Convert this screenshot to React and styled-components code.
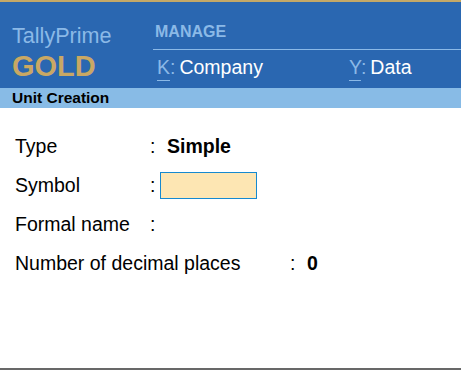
import React from "react";
import styled, { createGlobalStyle } from "styled-components";

const GlobalStyle = createGlobalStyle`
  html, body { margin: 0; padding: 0; background: #ffffff; }
  body { font-family: "Liberation Sans", Arial, sans-serif; }
  * { box-sizing: border-box; }
`;

const Frame = styled.div`
  width: 461px;
  height: 370px;
  display: flex;
  flex-direction: column;
  border-top: 2px solid #c4a867;
  border-bottom: 2px solid #686868;
  background: #ffffff;
  overflow: hidden;
`;

const Header = styled.header`
  height: 86px;
  background: #2a67b1;
  display: flex;
`;

const Brand = styled.div`
  width: 153px;
  padding: 23px 0 0 12px;
  display: flex;
  flex-direction: column;
`;

const BrandName = styled.div`
  font-size: 21.6px;
  line-height: 21px;
  color: #8bb9e7;
`;

const BrandEdition = styled.div`
  margin-top: 6px;
  font-size: 29px;
  line-height: 28px;
  font-weight: bold;
  color: #c9a864;
`;

const MenuArea = styled.nav`
  flex: 1;
  display: flex;
  flex-direction: column;
  padding-top: 22px;
`;

const SectionTitle = styled.div`
  padding-left: 2px;
  font-size: 16px;
  line-height: 16px;
  font-weight: bold;
  color: #8bb9e7;
`;

const Divider = styled.div`
  margin-top: 9px;
  height: 1px;
  background: #8bb9e7;
`;

const MenuRow = styled.div`
  margin-top: 8px;
  padding-left: 4px;
  display: grid;
  grid-template-columns: 192px 1fr;
`;

const MenuItem = styled.div`
  font-size: 19.5px;
  line-height: 19px;
  color: #ffffff;
  white-space: nowrap;
`;

const Key = styled.span`
  color: #8bb9e7;
  text-decoration: underline;
  text-decoration-thickness: 1px;
  text-underline-offset: 6px;
`;

const KeySep = styled.span`
  color: #8bb9e7;
  margin-right: 4px;
`;

const TitleBar = styled.div`
  height: 20px;
  background: #88bbe6;
  padding-left: 12px;
  font-size: 15.5px;
  line-height: 20px;
  font-weight: bold;
  color: #000000;
`;

const Body = styled.main`
  flex: 1;
  padding: 19px 0 0 15px;
  display: flex;
  flex-direction: column;
`;

const Row = styled.div`
  height: 39px;
  display: flex;
  align-items: center;
  font-size: 19.5px;
  line-height: 39px;
  color: #000000;
`;

const Label = styled.div`
  width: ${(p) => p.$width}px;
  white-space: nowrap;
`;

const Colon = styled.span`
  width: 10px;
`;

const Value = styled.div`
  padding-left: 7px;
  font-weight: bold;
`;

const Field = styled.div`
  width: 97px;
  height: 27px;
  background: #fde6b3;
  border: 1px solid #1689cf;
`;

const fields = [
  { label: "Type", width: 135, value: "Simple" },
  { label: "Symbol", width: 135, input: true },
  { label: "Formal name", width: 135, value: "" },
  { label: "Number of decimal places", width: 275, value: "0" },
];

export default function App() {
  return (
    <>
      <GlobalStyle />
      <Frame>
        <Header>
          <Brand>
            <BrandName>TallyPrime</BrandName>
            <BrandEdition>GOLD</BrandEdition>
          </Brand>
          <MenuArea>
            <SectionTitle>MANAGE</SectionTitle>
            <Divider />
            <MenuRow>
              <MenuItem>
                <Key>K</Key>
                <KeySep>:</KeySep>Company
              </MenuItem>
              <MenuItem>
                <Key>Y</Key>
                <KeySep>:</KeySep>Data
              </MenuItem>
            </MenuRow>
          </MenuArea>
        </Header>
        <TitleBar>Unit Creation</TitleBar>
        <Body>
          {fields.map((f) => (
            <Row key={f.label}>
              <Label $width={f.width}>{f.label}</Label>
              <Colon>:</Colon>
              {f.input ? <Field /> : <Value>{f.value}</Value>}
            </Row>
          ))}
        </Body>
      </Frame>
    </>
  );
}
